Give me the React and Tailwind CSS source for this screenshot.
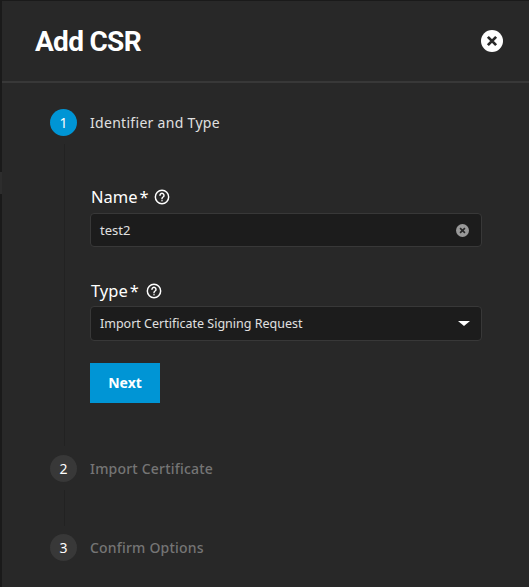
import React from 'react';

const bodyFont = "font-['Noto_Sans','Liberation_Sans',sans-serif]";

const HelpIcon = () => (
  <svg viewBox="0 0 24 24" className="w-4 h-4 text-white" fill="none" stroke="currentColor" strokeWidth="2.2" strokeLinecap="round">
    <circle cx="12" cy="12" r="10" />
    <path d="M9 9.5a3 3 0 1 1 4.6 2.5c-1 .7-1.6 1.3-1.6 2.5" />
    <path d="M12 17.6v.2" />
  </svg>
);

const ClearIcon = ({ size, circle, cross }) => (
  <svg viewBox="0 0 24 24" className={size}>
    <circle cx="12" cy="12" r="12" fill={circle} />
    <path d="M7.5 7.5l9 9M16.5 7.5l-9 9" stroke={cross} strokeWidth="3" />
  </svg>
);

const StepHead = ({ number, label, active }) => (
  <div className="flex items-center h-[27px]">
    <div className={`w-[27px] h-[27px] rounded-full flex items-center justify-center text-sm text-white ${active ? 'bg-[#0095d5]' : 'bg-[#383838]'}`}>
      {number}
    </div>
    <span className={`ml-[13px] text-sm ${active ? 'text-[#e0e0e0] tracking-[0.3px]' : 'text-[#757575] font-medium tracking-[0.2px]'}`}>{label}</span>
  </div>
);

const Label = ({ text, gap }) => (
  <div className="flex items-center h-5 pl-px text-[16.5px] text-white">
    <span>{text}</span>
    <span className="ml-0.5">*</span>
    <span className={gap}><HelpIcon /></span>
  </div>
);

const App = () => {
  return (
    <div className={`flex w-[529px] h-[587px] overflow-hidden bg-[#1a1a1a] pt-px ${bodyFont}`}>
      <div className="w-0.5 flex flex-col">
        <div className="h-[171px]" />
        <div className="h-[22px] bg-[#2d2d2d]" />
      </div>
      <div className="w-[527px] h-[586px] bg-[#282828]">
        <header className="h-[82px] border-b-2 border-[#383838] flex items-center justify-between pl-[33px] pr-[26px]">
          <h1 className="pt-0.5 text-[28px] font-bold text-white tracking-[-0.7px] font-['Roboto',sans-serif]">Add CSR</h1>
          <ClearIcon size="w-[22px] h-[22px]" circle="#ffffff" cross="#282828" />
        </header>

        <div className="pl-12 pr-[46px] pt-[26px]">
          <StepHead number="1" label="Identifier and Type" active />

          <div className="ml-[14px] mt-[8px] border-l border-[#222222] pl-[25px] h-[302px] pt-[43px] w-[418px]">
            <Label text="Name" gap="ml-[5px]" />
            <div className="mt-[6px] h-[34px] bg-[#1c1c1c] border border-[#383838] rounded-sm flex items-center justify-between pl-[9px] pr-[12px]">
              <span className="pt-px text-[13px] text-[#e0e0e0]">test2</span>
              <ClearIcon size="w-[13px] h-[13px]" circle="#999999" cross="#282828" />
            </div>

            <div className="mt-[34px]">
              <Label text="Type" gap="ml-[7px]" />
            </div>
            <div className="mt-[5px] h-[35px] bg-[#1c1c1c] border border-[#383838] rounded-sm flex items-center justify-between pl-[9px] pr-[11px]">
              <span className="pt-px text-[12.5px] text-[#e0e0e0]">Import Certificate Signing Request</span>
              <div className="w-0 h-0 border-x-[6px] border-x-transparent border-t-[5px] border-t-white" />
            </div>

            <button className="mt-[22px] w-[70px] h-10 bg-[#0095d5] text-white text-sm font-bold">Next</button>
          </div>

          <div className="mt-[9px]">
            <StepHead number="2" label="Import Certificate" />
          </div>
          <div className="ml-[14px] my-2 h-9 border-l border-[#222222]" />
          <StepHead number="3" label="Confirm Options" />
        </div>
      </div>
    </div>
  );
};

export default App;
